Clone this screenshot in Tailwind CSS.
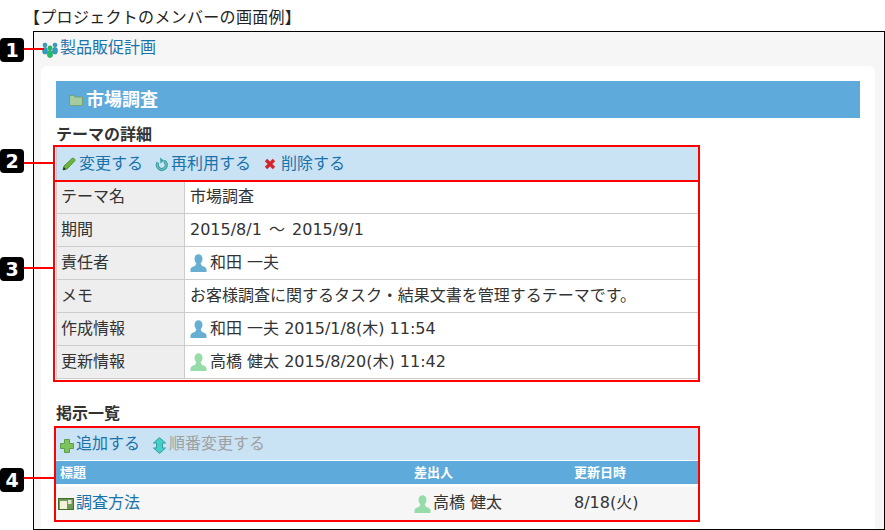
<!DOCTYPE html>
<html lang="ja">
<head>
<meta charset="utf-8">
<script src="https://cdn.jsdelivr.net/npm/@tailwindcss/browser@4"></script>
</head>
<body class="bg-white">
<div class="relative w-[885px] h-[530px] overflow-hidden bg-white text-[16px] leading-[24px] text-[#333] font-['DejaVu_Sans','Noto_Sans_CJK_JP',sans-serif]">
  <div class="h-[31px] pl-[24px] pt-[4px] text-[#222] leading-[24px] tracking-[0.3px] font-['Noto_Sans_CJK_JP',sans-serif]">【プロジェクトのメンバーの画面例】</div>
  <div class="ml-[33px] w-[852px] h-[499px] border border-black bg-[#f6f6f6]">
    <div class="h-[34px] pl-[8px] pb-[3px] flex items-center">
      <svg class="w-[16px] h-[16px] mt-[5px]" viewBox="0 0 16 16"><circle cx="3" cy="3" r="2" fill="#2f9fc4" stroke="#1d6f93" stroke-width=".5"/><rect x=".7" y="5.500" width="4.600" height="6.500" rx="2" fill="#2f9fc4" stroke="#1d6f93" stroke-width=".5"/><circle cx="13" cy="3" r="2" fill="#2f9fc4" stroke="#1d6f93" stroke-width=".5"/><rect x="10.700" y="5.500" width="4.600" height="6.500" rx="2" fill="#2f9fc4" stroke="#1d6f93" stroke-width=".5"/><circle cx="8" cy="6" r="2.200" fill="#1fc06a" stroke="#138a49" stroke-width=".5"/><rect x="5.500" y="8.500" width="5" height="7" rx="2.200" fill="#1fc06a" stroke="#138a49" stroke-width=".5"/></svg>
      <a class="ml-[2px] text-[#1a72ab]">製品販促計画</a>
    </div>
    <div class="ml-[7px] w-[834px] h-[463px] bg-white rounded-t-[6px] pt-[15px] px-[15px]">
      <div class="h-[37px] bg-[#5eaadb] flex items-center pl-[13px]">
        <svg class="w-[14px] h-[12px] mt-[1px]" viewBox="0 0 14 12"><path d="M0.500 1.500H5L6 3H13.500V11.500H0.500Z" fill="#a5cc9e" stroke="#76a373"/></svg>
        <span class="ml-[3px] text-[18px] font-bold text-white">市場調査</span>
      </div>
      <h2 class="mt-[5px] h-[23px] text-[16px] font-bold leading-[24px] text-[#333]">テーマの詳細</h2>
      <div class="w-[642px]">
        <div class="h-[35px] bg-[#c9e3f5] border-l border-[#b8c8d4] flex items-center pl-[5px] text-[#1a72ab]">
          <svg class="w-[14px] h-[14px] mt-[1px]" viewBox="0 0 14 14"><path d="M1 13L2 9L10 1.500Q11 .8 12 1.500L12.800 2.500Q13.300 3.300 12.600 4L5 12Z" fill="#6cb33f" stroke="#3f8a22" stroke-width=".8"/><path d="M1 13L1.700 10L4 12.300Z" fill="#2b2b2b"/></svg>
          <a class="ml-[3px]">変更する</a>
          <svg class="w-[13px] h-[14px] ml-[12px] mt-[1px]" viewBox="0 0 13 14"><path d="M3 5.500A4.500 4.500 0 1 0 9 4" fill="none" stroke="#2f8f93" stroke-width="3"/><path d="M3 5.500A4.500 4.500 0 1 0 9 4" fill="none" stroke="#63c4c2" stroke-width="1.400"/><path d="M5 .5L9 3.500L5.500 6.500Z" fill="#3aa3a5"/></svg>
          <a class="ml-[3px]">再利用する</a>
          <svg class="w-[12px] h-[12px] ml-[13px] mt-[1px]" viewBox="0 0 12 12"><path d="M2 2L10 10M10 2L2 10" stroke="#d6232a" stroke-width="3.200"/></svg>
          <a class="ml-[5px]">削除する</a>
        </div>
        <div class="border-l border-[#ccc] bg-white">
          <div class="flex h-[33px] border-b border-[#ccc]"><div class="w-[128px] bg-[#eee] border-r border-[#ccc] pl-[4px] flex items-center">テーマ名</div><div class="flex-1 pl-[5px] flex items-center">市場調査</div></div>
          <div class="flex h-[33px] border-b border-[#ccc]"><div class="w-[128px] bg-[#eee] border-r border-[#ccc] pl-[4px] flex items-center">期間</div><div class="flex-1 pl-[5px] flex items-center"><span>2015/8/1<span class="mx-[2px]"> ～ </span>2015/9/1</span></div></div>
          <div class="flex h-[33px] border-b border-[#ccc]"><div class="w-[128px] bg-[#eee] border-r border-[#ccc] pl-[4px] flex items-center">責任者</div><div class="flex-1 pl-[5px] flex items-center">
            <svg class="w-[17px] h-[18px] mr-[3px]" viewBox="0 0 17 18"><ellipse cx="8.500" cy="5" rx="4" ry="4.800" fill="#67afd2"/><path d="M0.500 18V15.500Q0.500 13 5 12L6.500 9H10.500L12 12Q16.500 13 16.500 15.500V18Z" fill="#67afd2"/></svg>和田 一夫</div></div>
          <div class="flex h-[33px] border-b border-[#ccc]"><div class="w-[128px] bg-[#eee] border-r border-[#ccc] pl-[4px] flex items-center">メモ</div><div class="flex-1 pl-[5px] flex items-center">お客様調査に関するタスク・結果文書を管理するテーマです。</div></div>
          <div class="flex h-[33px] border-b border-[#ccc]"><div class="w-[128px] bg-[#eee] border-r border-[#ccc] pl-[4px] flex items-center">作成情報</div><div class="flex-1 pl-[5px] flex items-center">
            <svg class="w-[17px] h-[18px] mr-[3px]" viewBox="0 0 17 18"><ellipse cx="8.500" cy="5" rx="4" ry="4.800" fill="#67afd2"/><path d="M0.500 18V15.500Q0.500 13 5 12L6.500 9H10.500L12 12Q16.500 13 16.500 15.500V18Z" fill="#67afd2"/></svg>和田 一夫 2015/1/8(木) 11:54</div></div>
          <div class="flex h-[33px] border-b border-[#ccc]"><div class="w-[128px] bg-[#eee] border-r border-[#ccc] pl-[4px] flex items-center">更新情報</div><div class="flex-1 pl-[5px] flex items-center">
            <svg class="w-[17px] h-[18px] mr-[3px]" viewBox="0 0 17 18"><ellipse cx="8.500" cy="5" rx="4" ry="4.800" fill="#95dca8"/><path d="M0.500 18V15.500Q0.500 13 5 12L6.500 9H10.500L12 12Q16.500 13 16.500 15.500V18Z" fill="#95dca8"/></svg>高橋 健太 2015/8/20(木) 11:42</div></div>
        </div>
      </div>
      <h2 class="mt-[23px] h-[25px] text-[16px] font-bold leading-[24px] text-[#333]">掲示一覧</h2>
      <div class="w-[642px]">
        <div class="h-[33px] bg-[#c9e3f5] flex items-center pl-[4px]">
          <svg class="w-[14px] h-[14px] mt-[5px]" viewBox="0 0 14 14"><path d="M4.500 0.500H9.500V4.500H13.500V9.500H9.500V13.500H4.500V9.500H0.500V4.500H4.500Z" fill="#7cc35c" stroke="#5e9e48"/></svg>
          <a class="ml-[2px] text-[#1a72ab]">追加する</a>
          <svg class="w-[13px] h-[17px] ml-[13px] mt-[4px]" viewBox="0 0 13 17"><path d="M6.500 0.500L12.500 6H9.500V11H12.500L6.500 16.500L0.500 11H3.500V6H0.500Z" fill="#45cfc6" stroke="#2f9f9a"/></svg>
          <span class="ml-[3px] text-[#a0a0a0]">順番変更する</span>
        </div>
        <div class="h-[23px] mt-[1px] bg-[#5eaadb] flex items-center text-[13px] font-bold text-white">
          <div class="w-[358px] pl-[4px]">標題</div><div class="w-[160px]">差出人</div><div>更新日時</div>
        </div>
        <div class="h-[34px] mt-[3px] bg-[#f6f6f6] flex items-center pb-[3px]">
          <div class="w-[358px] pl-[2px] flex items-center">
            <svg class="w-[16px] h-[12px] mt-[3px]" viewBox="0 0 16 12"><rect x=".5" y=".5" width="15" height="11" fill="#6f9a5c" stroke="#3d6e2c"/><rect x="2" y="3" width="7" height="8" fill="#f3f1d8"/><rect x="10" y="2" width="3.500" height="4" fill="#e6e6c8"/></svg>
            <a class="ml-[2px] text-[#1a72ab]">調査方法</a>
          </div>
          <div class="w-[160px] flex items-center">
            <svg class="w-[17px] h-[18px] mt-[3px] mr-[2px]" viewBox="0 0 17 18"><ellipse cx="8.500" cy="5" rx="4" ry="4.800" fill="#95dca8"/><path d="M0.500 18V15.500Q0.500 13 5 12L6.500 9H10.500L12 12Q16.500 13 16.500 15.500V18Z" fill="#95dca8"/></svg>高橋 健太</div>
          <div>8/18(火)</div>
        </div>
      </div>
    </div>
  </div>

  <!-- annotation overlays -->
  <div class="absolute left-[53px] top-[145px] w-[647px] h-[37px] border-2 border-[#f00]"></div>
  <div class="absolute left-[53px] top-[180px] w-[647px] h-[202px] border-2 border-[#f00]"></div>
  <div class="absolute left-[54px] top-[426px] w-[646px] h-[96px] border-2 border-[#f00]"></div>

  <div class="absolute left-[24px] top-[48px] w-[20px] h-[2px] bg-[#f00]"></div>
  <div class="absolute left-[24px] top-[162px] w-[30px] h-[2px] bg-[#f00]"></div>
  <div class="absolute left-[24px] top-[267px] w-[30px] h-[2px] bg-[#f00]"></div>
  <div class="absolute left-[24px] top-[477px] w-[30px] h-[2px] bg-[#f00]"></div>

  <div class="absolute left-0 top-[38px] w-[24px] h-[24px] rounded-[4px] bg-black text-white font-bold text-[19px] leading-[24px] text-center">1</div>
  <div class="absolute left-0 top-[149px] w-[24px] h-[24px] rounded-[4px] bg-black text-white font-bold text-[19px] leading-[24px] text-center">2</div>
  <div class="absolute left-0 top-[257px] w-[24px] h-[24px] rounded-[4px] bg-black text-white font-bold text-[19px] leading-[24px] text-center">3</div>
  <div class="absolute left-0 top-[468px] w-[24px] h-[24px] rounded-[4px] bg-black text-white font-bold text-[19px] leading-[24px] text-center">4</div>
</div>
</body>
</html>
